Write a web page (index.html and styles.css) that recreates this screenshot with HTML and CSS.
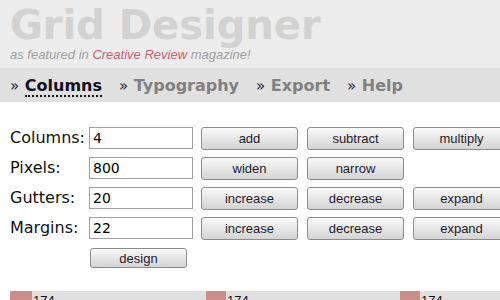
FILE: index.html
```html
<!DOCTYPE html>
<html lang="en">
<head>
  <meta charset="UTF-8" />
  <title>Grid Designer</title>
  <link rel="stylesheet" href="styles.css">
</head>
<body>

  <header class="masthead">
    <h1>Grid Designer</h1>
    <p class="tagline">as featured in <span class="mag">Creative Review</span> magazine!</p>
  </header>

  <nav class="tabs">
    <a class="tab active" href="#"><span class="arrow">&raquo;</span> <span class="label">Columns</span></a>
    <a class="tab" href="#"><span class="arrow">&raquo;</span> <span class="label">Typography</span></a>
    <a class="tab" href="#"><span class="arrow">&raquo;</span> <span class="label">Export</span></a>
    <a class="tab" href="#"><span class="arrow">&raquo;</span> <span class="label">Help</span></a>
  </nav>

  <form class="controls" onsubmit="return false">
    <label for="columns">Columns:</label>
    <input type="text" id="columns" value="4">
    <button class="btn">add</button>
    <button class="btn">subtract</button>
    <button class="btn">multiply</button>

    <label for="pixels">Pixels:</label>
    <input type="text" id="pixels" value="800">
    <button class="btn">widen</button>
    <button class="btn">narrow</button>
    <span></span>

    <label for="gutters">Gutters:</label>
    <input type="text" id="gutters" value="20">
    <button class="btn">increase</button>
    <button class="btn">decrease</button>
    <button class="btn">expand</button>

    <label for="margins">Margins:</label>
    <input type="text" id="margins" value="22">
    <button class="btn">increase</button>
    <button class="btn">decrease</button>
    <button class="btn">expand</button>

    <span></span>
    <button class="btn design-btn">design</button>
  </form>

  <div class="preview">
    <div class="margin m-outer"></div><div class="col">174</div>
    <div class="margin"></div><div class="col">174</div>
    <div class="margin"></div><div class="col">174</div>
  </div>

</body>
</html>
```

FILE: styles.css
```css
body {
  margin: 0;
  background: #fff;
  font-family: "DejaVu Sans", Verdana, sans-serif;
  overflow: hidden;
}

.masthead {
  background: #ececec;
  padding: 4px 10px 0;
  height: 68px;
  box-sizing: border-box;
}

.masthead h1 {
  margin: 0;
  font-size: 40px;
  line-height: 42px;
  color: #d2d2d2;
  font-weight: bold;
}

.tagline {
  margin: 1px 0 0;
  font-family: "Liberation Sans", Arial, sans-serif;
  font-style: italic;
  font-size: 13px;
  color: #a0a0a0;
}

.tagline .mag {
  color: #c85f6c;
}

.tabs {
  display: flex;
  gap: 17px;
  height: 34px;
  align-items: center;
  padding: 0 10px;
  background: #e0e0e0;
}

.tab {
  text-decoration: none;
  font-weight: bold;
  font-size: 16px;
  color: #808080;
}

.tab .arrow {
  color: #1a1a40;
  font-size: 15px;
  font-weight: normal;
}

.tab.active .label {
  color: #111122;
  border-bottom: 2px dotted #111;
}

.controls {
  display: grid;
  grid-template-columns: 79px 104px 105px 106px 106px;
  row-gap: 7px;
  padding: 25px 0 0 10px;
  width: 700px;
}

.controls label {
  font-size: 16px;
  color: #111;
  line-height: 22px;
}

.controls input {
  width: 104px;
  height: 22px;
  box-sizing: border-box;
  border: 1px solid #a0a0a0;
  font-family: "DejaVu Sans", Verdana, sans-serif;
  font-size: 14px;
  padding: 1px 3px;
  margin: 0;
}

.btn {
  justify-self: end;
  width: 97px;
  height: 23px;
  font-family: "Liberation Sans", Arial, sans-serif;
  font-size: 13px;
  color: #1c1c2c;
  background: linear-gradient(#fafafa, #e6e6e6 50%, #d4d4d4);
  border: 1px solid #8c8c8c;
  border-radius: 3px;
  padding: 0;
  margin: 0;
}

.design-btn {
  grid-column: 2;
  justify-self: start;
  height: 20px;
  margin: 1px 0 0 1px;
}

.preview {
  display: flex;
  margin: 23px 0 0 10px;
  background: #e0e0e0;
  height: 20px;
  width: 600px;
}

.margin {
  width: 20px;
  background: #d08c8c;
}

.m-outer {
  width: 22px;
}

.col {
  width: 174px;
  font-family: "Liberation Sans", Arial, sans-serif;
  font-size: 13px;
  color: #111;
  padding: 2px 0 0 1px;
  box-sizing: border-box;
}
```
